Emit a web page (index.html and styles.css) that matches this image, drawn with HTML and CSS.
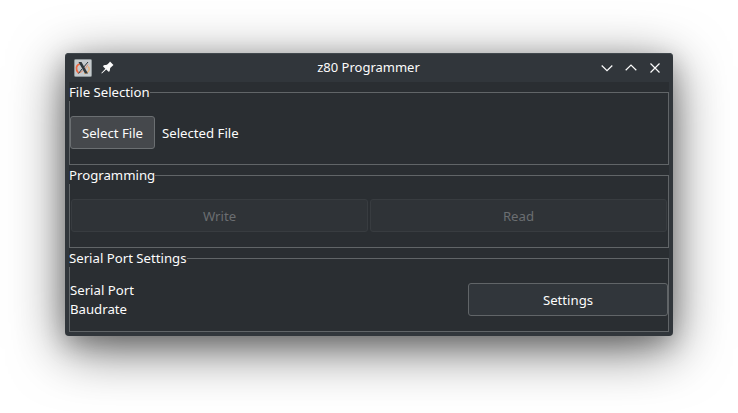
FILE: index.html
```html
<!DOCTYPE html>
<html lang="en">
<head>
<meta charset="utf-8">
<title>z80 Programmer</title>
<link rel="stylesheet" href="styles.css">
</head>
<body>
<main class="window">
  <header class="titlebar">
    <div class="title-left">
      <svg class="app-icon" width="18" height="18" viewBox="0 0 18 18">
        <rect x=".5" y=".5" width="17" height="17" rx="1" fill="#c5cacd" stroke="#8f9699"/>
        <path d="M6 5C1.500 6 1.500 11 4.500 14" fill="none" stroke="#ee6842" stroke-width="1.700"/>
        <path d="M4.500 14C8 13.500 11 10 14 5.500" fill="none" stroke="#e58b6b" stroke-width="1"/>
        <path d="M14 7.500C16.500 10 15 14 10 14.500" fill="none" stroke="#e6b179" stroke-width="1.400"/>
        <path d="M4.500 3h3l6.500 11.500H11z" fill="#30383c"/>
        <path d="M14 3L9.800 8M8 10L4.500 14.500" stroke="#30383c" stroke-width="1"/>
      </svg>
      <svg width="13" height="13" viewBox="0 0 12 12" fill="#fcfcfc"><path d="M8.300.5L11.500 3.700 10.500 4.500 8.500 6.500 8 9.500 7 10 4.800 7.900.8 11.500.3 11 4 7.100 1.900 5 2.500 4 5.500 3.500 7.500 1.500z"/></svg>
    </div>
    <h1 class="title">z80 Programmer</h1>
    <div class="controls">
      <svg width="12" height="12" viewBox="0 0 12 12"><path d="M.7 3.500L6 8.700 11.300 3.500"/></svg>
      <svg width="12" height="12" viewBox="0 0 12 12"><path d="M.7 8.300L6 3.100 11.300 8.300"/></svg>
      <svg width="12" height="12" viewBox="0 0 12 12"><path d="M1.500 1.500L10.500 10.500M10.500 1.500L1.500 10.500"/></svg>
    </div>
  </header>
  <div class="content">
    <section class="group">
      <h2 class="legend">File Selection</h2>
      <div class="row file-row">
        <button class="btn hover">Select File</button>
        <span class="file-name">Selected File</span>
      </div>
    </section>
    <section class="group">
      <h2 class="legend">Programming</h2>
      <div class="row program-row">
        <button class="btn" disabled>Write</button>
        <button class="btn" disabled>Read</button>
      </div>
    </section>
    <section class="group last">
      <h2 class="legend">Serial Port Settings</h2>
      <div class="row serial-row">
        <div class="labels"><div>Serial Port</div><div>Baudrate</div></div>
        <button class="btn">Settings</button>
      </div>
    </section>
  </div>
</main>
</body>
</html>
```

FILE: styles.css
```css
* { box-sizing: border-box; }
body {
  margin: 0;
  padding: 53px 65px 0;
  height: 413px;
  overflow: hidden;
  background: #fff;
  color: #fcfcfc;
  font: 13.2px/19px "Noto Sans", sans-serif;
}
.window {
  width: 608px;
  height: 283px;
  padding: 0 4px 4px;
  border-radius: 4px;
  background: #31363b;
  box-shadow: 0 13px 54px rgba(0, 0, 0, .6), 0 8px 24px rgba(0, 0, 0, .22), inset 0 1px #41484d;
}
.titlebar {
  display: grid;
  grid-template-columns: 1fr auto 1fr;
  align-items: center;
  height: 29px;
  padding: 0 8px 0 5px;
}
.title-left, .controls { display: flex; align-items: center; }
.title-left { gap: 9px; }
.controls { gap: 12px; justify-content: flex-end; }
.controls svg { fill: none; stroke: #fcfcfc; stroke-width: 1.2; }
.title { margin: 0 -1px 0 1px; font-size: 13px; font-weight: 400; }
.content {
  height: 250px;
  padding-top: 10px;
  background: #2a2e32;
}
.group {
  height: 73px;
  margin-bottom: 10px;
  border: 1px solid #616568;
}
.group.last { height: 74px; margin-bottom: 0; }
.legend {
  width: fit-content;
  height: 19px;
  margin: -11px 0 0 -1px;
  background: #2a2e32;
  font-size: 13.2px;
  line-height: 21px;
  font-weight: 400;
}
.row { display: flex; margin-top: 15px; }
.btn {
  height: 33px;
  padding: 2px 0 0;
  border: 1px solid #616568;
  border-radius: 3px;
  background: #31363b;
  color: #fcfcfc;
  font: inherit;
}
.btn.hover { width: 85px; background: #45484c; border-color: #6b6f72; }
.btn:disabled { flex: 1; background: #2f3337; border-color: #383c40; color: #6b6e71; }
.file-row { gap: 7px; align-items: center; }
.file-name { padding-top: 2px; }
.program-row { gap: 2px; padding: 0 1px; }
.serial-row { justify-content: space-between; align-items: flex-start; margin-top: 14px; }
.serial-row .btn { width: 200px; margin-top: 2px; }
```
